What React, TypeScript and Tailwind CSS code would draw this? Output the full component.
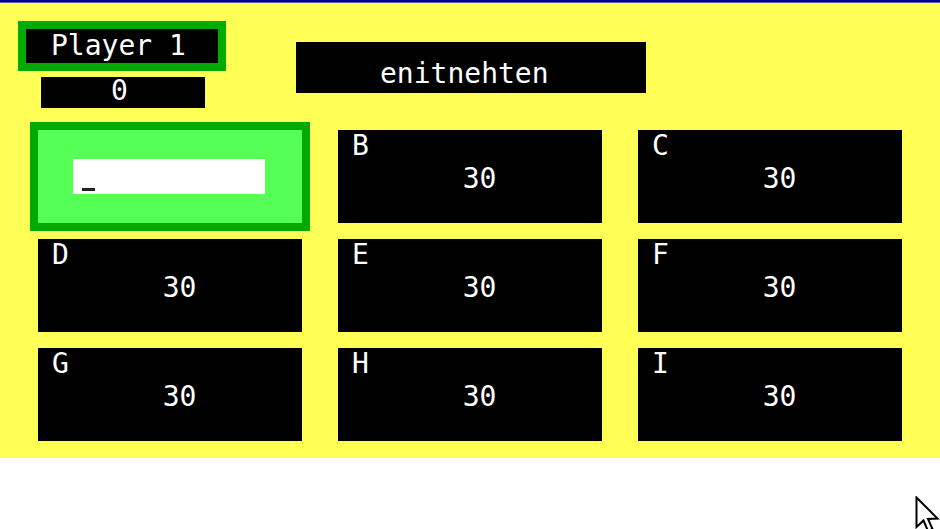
import React from "react";

const font = { fontFamily: '"DejaVu Sans Mono", "Liberation Mono", monospace' };

function Cell({ label, value }: { label: string; value: string }) {
  return (
    <div className="bg-black h-[93px] flex flex-col text-white text-[28px] leading-[28px]">
      <div className="pl-[14px] pt-[2px]">{label}</div>
      <div className="mt-[5px] flex justify-center pl-[19px]">{value}</div>
    </div>
  );
}

export default function App() {
  const cells = [
    ["B", "30"],
    ["C", "30"],
    ["D", "30"],
    ["E", "30"],
    ["F", "30"],
    ["G", "30"],
    ["H", "30"],
    ["I", "30"],
  ];
  return (
    <div className="relative w-[940px] h-[529px] overflow-hidden bg-white" style={font}>
      <div className="h-[2px] bg-[#00008b]" />
      <div className="h-[1px] bg-[#5a5aa8]" />
      <div className="bg-[#ffff55] pb-[17px]">
        <div className="flex items-start">
          <div className="flex flex-col items-start">
            <div className="ml-[18px] mt-[18px] w-[208px] h-[50px] border-[8px] border-[#00aa00] bg-black flex items-center pl-[25px] text-white text-[28px] leading-[28px]">
              Player 1
            </div>
            <div className="ml-[41px] mt-[6px] w-[164px] h-[31px] bg-black flex justify-center pr-[7px] text-white text-[28px] leading-[28px]">
              0
            </div>
          </div>
          <div className="ml-[70px] mt-[39px] w-[350px] h-[51px] bg-black pl-[84px] pt-[18px] text-white text-[28px] leading-[28px]">
            enitnehten
          </div>
        </div>
        <div className="mt-[22px] px-[38px] grid grid-cols-[264px_264px_264px] gap-x-[36px] gap-y-[16px]">
          <div className="h-[93px] bg-[#55ff55] outline-[8px] outline-solid outline-[#00aa00] pl-[35px] pt-[29px]">
            <div className="w-[192px] h-[35px] bg-white flex items-end pl-[9px] pb-[3px]">
              <div className="w-[13px] h-[3px] bg-[#222]" />
            </div>
          </div>
          {cells.map(([l, v]) => (
            <Cell key={l} label={l} value={v} />
          ))}
        </div>
      </div>
      <svg
        className="absolute left-[915px] top-[496px]"
        width="30"
        height="40"
        viewBox="0 0 30 40"
      >
        <path
          d="M1.5 1.5 L1.5 31 L8.5 24.5 L13 35 L17.5 33 L13 23 L22.5 22.5 Z"
          fill="white"
          stroke="black"
          strokeWidth="2"
          strokeLinejoin="miter"
        />
      </svg>
    </div>
  );
}
